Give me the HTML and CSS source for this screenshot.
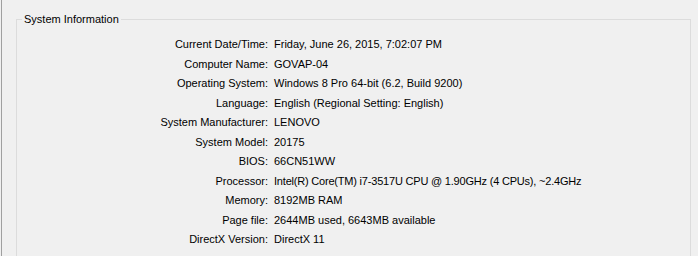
FILE: index.html
```html
<!DOCTYPE html>
<html>
<head>
<meta charset="utf-8">
<link rel="stylesheet" href="styles.css">
</head>
<body>
<div class="page">
  <fieldset class="group">
    <legend class="group-title">System Information</legend>
    <div class="info">
      <div class="label">Current Date/Time:</div><div class="value">Friday, June 26, 2015, 7:02:07 PM</div>
      <div class="label">Computer Name:</div><div class="value">GOVAP-04</div>
      <div class="label">Operating System:</div><div class="value">Windows 8 Pro 64-bit (6.2, Build 9200)</div>
      <div class="label">Language:</div><div class="value">English (Regional Setting: English)</div>
      <div class="label">System Manufacturer:</div><div class="value">LENOVO</div>
      <div class="label">System Model:</div><div class="value">20175</div>
      <div class="label">BIOS:</div><div class="value">66CN51WW</div>
      <div class="label">Processor:</div><div class="value processor">Intel(R) Core(TM) i7-3517U CPU @ 1.90GHz (4 CPUs), ~2.4GHz</div>
      <div class="label">Memory:</div><div class="value">8192MB RAM</div>
      <div class="label">Page file:</div><div class="value">2644MB used, 6643MB available</div>
      <div class="label">DirectX Version:</div><div class="value">DirectX 11</div>
    </div>
  </fieldset>
</div>
</body>
</html>
```

FILE: styles.css
```css
html, body {
  margin: 0;
  padding: 0;
  background: #f0f0f0;
  overflow: hidden;
}

body {
  font-family: "Liberation Sans", Arial, sans-serif;
  font-size: 11px;
  color: #000;
}

.page {
  margin-left: 1px;
  border-left: 1px solid #a0a0a0;
  padding: 12px 0 0 14px;
  height: 256px;
  box-sizing: border-box;
  overflow: hidden;
}

.group {
  margin: 0;
  width: 675px;
  height: 252px;
  box-sizing: border-box;
  border: 1px solid #dcdcdc;
  padding: 0;
}

.group-title {
  margin-left: 5px;
  padding: 0 2px;
  line-height: 14px;
}

.info {
  display: grid;
  grid-template-columns: 251px 1fr;
  column-gap: 6px;
  padding-top: 9px;
}

.label {
  text-align: right;
  line-height: 19.5px;
  white-space: nowrap;
}

.value {
  line-height: 19.5px;
  white-space: nowrap;
}

.processor {
  letter-spacing: -0.2px;
}
```
